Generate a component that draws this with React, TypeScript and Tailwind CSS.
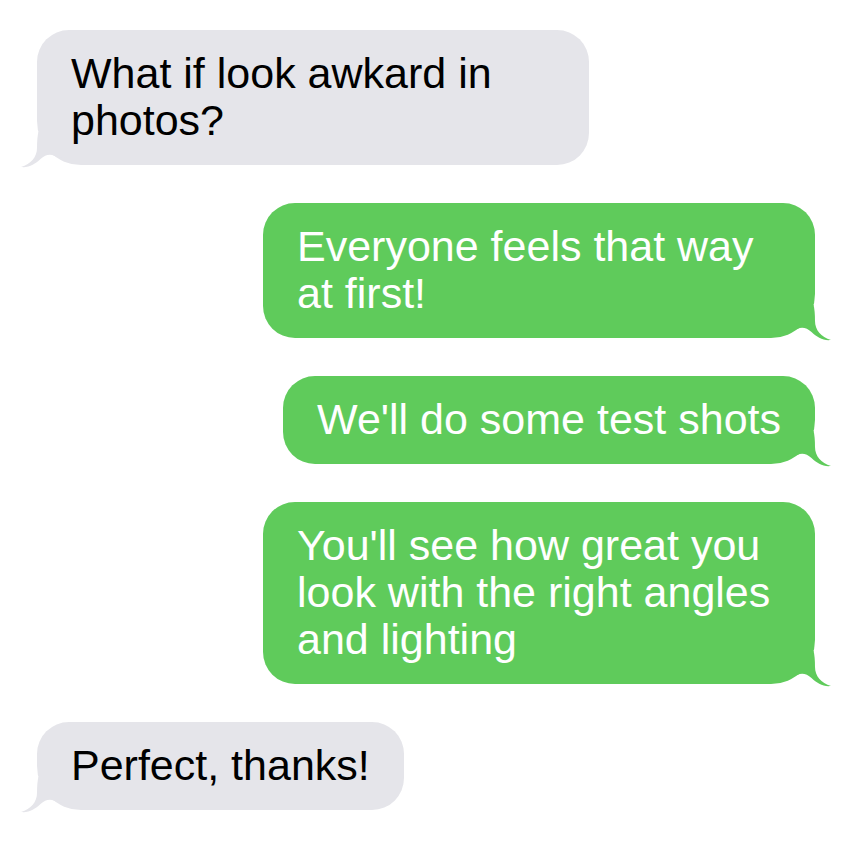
import React from "react";

type Msg = { id: number; text: string; mine: boolean };

const messages: Msg[] = [
  { id: 1, text: "What if look awkard in photos?", mine: false },
  { id: 2, text: "Everyone feels that way at first!", mine: true },
  { id: 3, text: "We'll do some test shots", mine: true },
  { id: 4, text: "You'll see how great you look with the right angles and lighting", mine: true },
  { id: 5, text: "Perfect, thanks!", mine: false },
];

// curled tail at the bottom corner; drawn for the right side, mirrored for the left
const Tail = ({ mine }: { mine: boolean }) => (
  <svg
    width="54"
    height="36"
    viewBox="0 0 54 36"
    className={
      mine
        ? "absolute right-[-18px] bottom-[-3px] fill-[#5fcb5b]"
        : "absolute left-[-18px] bottom-[-3px] fill-[#e5e5ea] -scale-x-100"
    }
  >
    <path d="M8 0 H34.6 Q36 6 36 16 C36 25 42 32 52 35 C44 36 38 32 32.5 27 C28 23 23 21.5 18.5 24 L8 26 Z" />
  </svg>
);

const Bubble = ({ msg }: { msg: Msg }) => (
  <div className={msg.mine ? "flex justify-end" : "flex justify-start"}>
    <div
      className={
        msg.mine
          ? "relative max-w-[552px] rounded-[32px] rounded-br-[44px] bg-[#5fcb5b] px-[34px] pt-[20px] pb-[21px] text-white"
          : "relative max-w-[552px] rounded-[32px] rounded-bl-[44px] bg-[#e5e5ea] px-[34px] pt-[20px] pb-[21px] text-black"
      }
    >
      <Tail mine={msg.mine} />
      <p className="relative text-[43px] leading-[47px]">{msg.text}</p>
    </div>
  </div>
);

export default function App() {
  return (
    <div
      className="min-h-[852px] w-[852px] bg-white px-[37px] pt-[30px]"
      style={{ fontFamily: '"Liberation Sans", Arial, sans-serif' }}
    >
      <div className="flex flex-col gap-[38px]">
        {messages.map((m) => (
          <Bubble key={m.id} msg={m} />
        ))}
      </div>
    </div>
  );
}
